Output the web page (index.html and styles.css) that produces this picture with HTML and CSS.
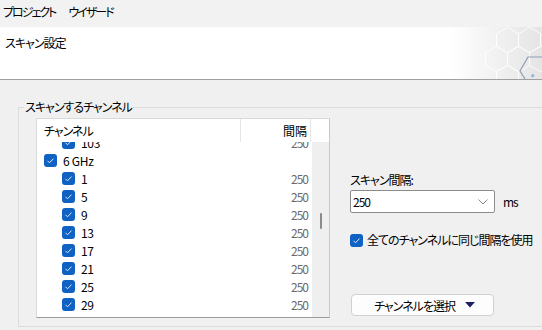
FILE: index.html
```html
<!DOCTYPE html>
<html lang="ja">
<head>
  <meta charset="UTF-8">
  <title>スキャン設定</title>
  <link rel="stylesheet" href="styles.css">
</head>
<body>
  <!-- メニューバー -->
  <div class="menubar">
    <span class="menu-item">プロジェクト</span>
    <span class="menu-item">ウイザード</span>
  </div>

  <!-- ヘッダー -->
  <div class="banner">
    <div class="banner-title">スキャン設定</div>
    <svg class="banner-art" width="90" height="52" viewBox="0 0 90 52">
      <g fill="none" stroke="#ffffff" stroke-width="1" opacity="0.9">
        <polygon points="55.5,0.3 66.5,6.6 66.5,19.4 55.5,25.7 44.5,19.4 44.5,6.6"/>
        <polygon points="77.5,0.3 88.5,6.6 88.5,19.4 77.5,25.7 66.5,19.4 66.5,6.6"/>
        <polygon points="44.5,19.3 55.5,25.6 55.5,38.4 44.5,44.7 33.5,38.4 33.5,25.6"/>
        <polygon points="66.5,19.3 77.5,25.6 77.5,38.4 66.5,44.7 55.5,38.4 55.5,25.6"/>
        <polygon points="88.5,19.3 99.5,25.6 99.5,38.4 88.5,44.7 77.5,38.4 77.5,25.6"/>
        <polygon points="55.5,38.3 66.5,44.6 66.5,57.4 55.5,63.7 44.5,57.4 44.5,44.6"/>
      </g>
      <polyline points="90,30 76,30 68,44 73,52" fill="none" stroke="#8e9db0" stroke-width="1.2"/>
      <circle cx="80.7" cy="48.7" r="1.6" fill="#8db6ea"/>
    </svg>
  </div>

  <div class="content">
    <fieldset class="group">
      <legend>スキャンするチャンネル</legend>
      <div class="group-body">
        <!-- チャンネル一覧 -->
        <div class="channel-list">
          <div class="list-head">
            <div class="col-name">チャンネル</div>
            <div class="col-interval">間隔</div>
            <div class="col-rest"></div>
          </div>
          <div class="list-body">
            <div class="rows">
              <div class="rows-inner">
                <div class="row child"><span class="check"><svg width="13" height="13"><polyline points="3.5,6.8 5.5,8.8 9.5,4.6"/></svg></span><span class="row-name">103</span><span class="row-value">250</span></div>
                <div class="row"><span class="check"><svg width="13" height="13"><polyline points="3.5,6.8 5.5,8.8 9.5,4.6"/></svg></span><span class="row-name">6 GHz</span><span class="row-value"></span></div>
                <div class="row child"><span class="check"><svg width="13" height="13"><polyline points="3.5,6.8 5.5,8.8 9.5,4.6"/></svg></span><span class="row-name">1</span><span class="row-value">250</span></div>
                <div class="row child"><span class="check"><svg width="13" height="13"><polyline points="3.5,6.8 5.5,8.8 9.5,4.6"/></svg></span><span class="row-name">5</span><span class="row-value">250</span></div>
                <div class="row child"><span class="check"><svg width="13" height="13"><polyline points="3.5,6.8 5.5,8.8 9.5,4.6"/></svg></span><span class="row-name">9</span><span class="row-value">250</span></div>
                <div class="row child"><span class="check"><svg width="13" height="13"><polyline points="3.5,6.8 5.5,8.8 9.5,4.6"/></svg></span><span class="row-name">13</span><span class="row-value">250</span></div>
                <div class="row child"><span class="check"><svg width="13" height="13"><polyline points="3.5,6.8 5.5,8.8 9.5,4.6"/></svg></span><span class="row-name">17</span><span class="row-value">250</span></div>
                <div class="row child"><span class="check"><svg width="13" height="13"><polyline points="3.5,6.8 5.5,8.8 9.5,4.6"/></svg></span><span class="row-name">21</span><span class="row-value">250</span></div>
                <div class="row child"><span class="check"><svg width="13" height="13"><polyline points="3.5,6.8 5.5,8.8 9.5,4.6"/></svg></span><span class="row-name">25</span><span class="row-value">250</span></div>
                <div class="row child"><span class="check"><svg width="13" height="13"><polyline points="3.5,6.8 5.5,8.8 9.5,4.6"/></svg></span><span class="row-name">29</span><span class="row-value">250</span></div>
              </div>
            </div>
            <div class="scrollbar"><div class="thumb"></div></div>
          </div>
        </div>

        <!-- 設定 -->
        <div class="settings">
          <div class="field-label">スキャン間隔:</div>
          <div class="combo-row">
            <div class="combo">
              <span>250</span>
              <svg width="10" height="6" viewBox="0 0 10 6"><polyline points="0.5,0.5 5,5 9.5,0.5" fill="none" stroke="#8a8a8a" stroke-width="1"/></svg>
            </div>
            <span class="unit">ms</span>
          </div>
          <div class="same-row">
            <span class="check"><svg width="13" height="13"><polyline points="3.5,6.8 5.5,8.8 9.5,4.6"/></svg></span>
            <span>全てのチャンネルに同じ間隔を使用</span>
          </div>
          <div class="select-btn">
            <span>チャンネルを選択</span>
            <svg width="10" height="6" viewBox="0 0 10 6"><polygon points="0,0 10,0 5,5.5" fill="#1e2160"/></svg>
          </div>
        </div>
      </div>
    </fieldset>
  </div>
</body>
</html>
```

FILE: styles.css
```css
* {box-sizing: border-box;}
body {
  margin: 0;
  padding: 0;
  width: 542px;
  height: 330px;
  overflow: hidden;
  background: #f0f0f0;
  color: #000;
  font-family: 'Noto Sans CJK JP', 'Noto Sans', sans-serif;
  font-size: 12px;
  font-feature-settings: "palt";
  letter-spacing: -1px;
}
.menubar {height: 27px; background: #f2f2f2; display: flex; gap: 13px; padding-left: 3px; letter-spacing: -2px;}
.menu-item {line-height: 24px;}

.banner {
  height: 53px;
  display: flex;
  justify-content: space-between;
  background: linear-gradient(to right, #fff 0, #fff 450px, #e4e4e4 542px);
  border-bottom: 1px solid #a0a0a0;
}
.banner-title {
  padding: 8px 0 0 5px;
  line-height: 16px;
}
.banner-art {display: block;}

.content {
  padding-top: 19px;
}
.group {
  margin: 0 0 0 18px;
  padding: 3px 0 8px 5px;
  width: 600px;
  border: 1px solid #dcdcdc;
  min-inline-size: 0;
}
.group legend {
  padding: 0 1px;
  line-height: 16px;
}
.group-body {
  display: flex;
  padding-left: 12px;
}

/* チャンネル一覧 */
.channel-list {
  width: 294px;
  height: 200px;
  border: 1px solid #d9d9d9;
  border-bottom-color: #9c9c9c;
  border-right-color: #c8c8c8;
  background: #fff;
  display: flex;
  flex-direction: column;
}
.list-head {
  display: flex;
  height: 23px;
  line-height: 23px;
  background: #fff;
}
.col-name {width: 204px; padding-left: 7px; border-right: 1px solid #e5e5e5;}
.col-interval {width: 70px; padding-right: 3px; text-align: right; border-right: 1px solid #e5e5e5; letter-spacing: 0;}
.col-rest {flex: 1;}
.list-body {
  flex: 1;
  display: flex;
  overflow: hidden;
}
.rows {
  width: 275px;
  overflow: hidden;
  background: #fff;
}
.rows-inner {margin-top: -9px;}
.row {
  display: flex;
  align-items: center;
  height: 18px;
  padding: 0 4px 0 7px;
}
.row.child {padding-left: 25px;}
.row-name {margin-left: 6px; letter-spacing: -0.3px; white-space: pre;}
.row-value {margin-left: auto; color: #6a6a6a;}
.scrollbar {
  width: 17px;
  background: #efefef;
  display: flex;
  justify-content: center;
}
.thumb {
  width: 2px;
  height: 16px;
  margin-top: 71px;
  background: #8a8a8a;
  border-radius: 1px;
}

.check {
  width: 13px;
  height: 13px;
  border-radius: 3px;
  background: #0f62c4;
  flex: none;
  display: flex;
}
.check polyline {fill: none; stroke: #dbe8f8; stroke-width: 1;}

/* 設定 */
.settings {
  margin-left: 20px;
  padding-top: 54px;
}
.field-label {line-height: 16px;}
.combo-row {
  display: flex;
  align-items: center;
  margin-top: 2px;
}
.combo {
  width: 145px;
  height: 23px;
  border: 1px solid #8c8c8c;
  border-radius: 2px;
  background: #fff;
  display: flex;
  align-items: center;
  justify-content: space-between;
  padding: 0 6px 0 2px;
}
.unit {margin-left: 8px;}
.same-row {
  display: flex;
  align-items: center;
  gap: 4px;
  margin-top: 19px;
  line-height: 16px;
}
.select-btn {
  width: 143px;
  height: 22px;
  margin: 46px 0 0 1px;
  border: 1px solid #d0d0d0;
  border-radius: 4px;
  background: #fdfdfd;
  display: flex;
  align-items: center;
  justify-content: center;
  gap: 10px;
  padding-left: 4px;
}
```
